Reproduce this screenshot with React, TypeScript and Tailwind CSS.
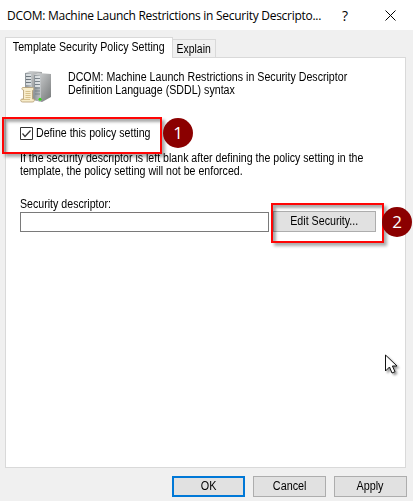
import type { ReactNode } from "react";

function Badge({ n, className }: { n: string; className: string }) {
  return (
    <div className={`absolute flex h-[30px] w-[30px] items-center justify-center rounded-full bg-[#8b0000] pb-0.5 font-['Open_Sans','Noto_Sans',sans-serif] text-[17px] leading-none text-white ${className}`}>
      {n}
    </div>
  );
}

function DialogButton({ children, primary = false }: { children: ReactNode; primary?: boolean }) {
  return (
    <button className={`flex h-[21px] w-[73px] items-center justify-center bg-[#e1e1e1] ${primary ? "border-2 border-[#0078d7]" : "border border-[#adadad]"}`}>
      <span className="scale-x-[.9]">{children}</span>
    </button>
  );
}

function ServerIcon() {
  return (
    <svg width="32" height="32" viewBox="0 0 32 32" className="shrink-0">
      <defs>
        <linearGradient id="side" x1="0" x2="1" y1="0" y2="1">
          <stop offset="0" stopColor="#d9dbdc" />
          <stop offset="1" stopColor="#747778" />
        </linearGradient>
        <linearGradient id="front" x1="0" x2="1">
          <stop offset="0" stopColor="#8b9297" />
          <stop offset="1" stopColor="#c3c7c9" />
        </linearGradient>
      </defs>
      <path d="M5 2 10 0 22 1 22 26 13 28 5 25Z" fill="url(#side)" />
      <path d="M5 2 12 2 12 28 5 25Z" fill="url(#front)" />
      <path d="M6 4h5M6 7h5M6 10h5M6 13h5" stroke="#e9edef" strokeWidth="1.4" />
      <path d="M6 5.5h5M6 8.5h5M6 11.5h5" stroke="#566069" strokeWidth=".7" />
      <path d="M14 4 18 2 31 3 31 26 22 31 14 29Z" fill="url(#side)" />
      <path d="M14 4 21 4 21 31 14 29Z" fill="url(#front)" />
      <path d="M15 6h5M15 9h5M15 12h5M15 15h5" stroke="#edf0f2" strokeWidth="1.5" />
      <path d="M15 7.5h5M15 10.5h5M15 13.5h5M15 17h5M15 20h5M15 23h5" stroke="#69737b" strokeWidth=".7" />
      <circle cx="20" cy="28.3" r="1.5" fill="#35d51b" />
      <path d="M3 16.5h9.5c2 0 1.5 3 0 3V28h2c0 2.5-.7 3-2.5 3H2.5C.2 31 .3 28 2 28h1.5V19C1.5 19 1.4 16.5 3 16.5Z" fill="#f8edcb" stroke="#b19b70" strokeWidth=".8" />
      <path d="M5.5 20.5h5M5.5 22.5h5M5.5 24.5h5M5.5 26.5h5M2 28.5h8" stroke="#c9ad73" strokeWidth=".7" />
    </svg>
  );
}

export default function App() {
  return (
    <div className="relative flex h-[501px] w-[413px] flex-col overflow-hidden bg-[#f0f0f0] font-['Liberation_Sans',Arial,sans-serif] text-[12px] leading-[13px] text-black">
      <header className="flex h-[30px] shrink-0 items-center bg-white pl-[7px] font-['Open_Sans','Noto_Sans',sans-serif] text-[12px]">
        <h1 className="w-[335px] whitespace-nowrap"><span className="tracking-[-0.28px]">DCOM: Machine Launch Restrictions in Security Descripto...</span></h1>
        <span className="w-[43px] text-[14px]">?</span>
        <svg width="11" height="11" viewBox="0 0 11 11" fill="none" stroke="black"><path d="m.5.5 10 10m0-10-10 10" /></svg>
      </header>

      <div className="ml-[5px] mt-[7px] flex h-5 shrink-0 items-end">
        <div className="relative z-10 -mb-px flex h-[21px] w-[168px] justify-center border border-b-0 border-[#d9d9d9] bg-white pt-[3px]">
          <span className="scale-x-[.885] whitespace-nowrap">Template Security Policy Setting</span>
        </div>
        <div className="flex h-[18px] w-[43px] justify-center border border-b-0 border-l-0 border-[#d9d9d9] pt-[3px]"><span className="scale-x-[.87]">Explain</span></div>
      </div>

      <main className="ml-[5px] flex h-[411px] w-[401px] shrink-0 flex-col border border-[#d9d9d9] bg-white pl-[14px]">
        <div className="mt-[13px] flex h-8 items-start">
          <ServerIcon />
          <p className="ml-4 origin-left scale-x-[.887] whitespace-nowrap">DCOM: Machine Launch Restrictions in Security Descriptor<br />Definition Language (SDDL) syntax</p>
        </div>
        <label className="mt-[24px] flex h-[13px] items-center">
          <svg width="13" height="13" viewBox="0 0 13 13" fill="none" stroke="#333"><path d="M.5.5h12v12H.5Z" /><path d="m2.5 6.5 2.5 3 5.5-6" strokeWidth="1.2" /></svg>
          <span className="ml-[3px] origin-left scale-x-[.885] whitespace-nowrap">Define this policy setting</span>
        </label>
        <p className="mt-[12px] origin-left scale-x-[.883] self-start whitespace-nowrap">If the security descriptor is left blank after defining the policy setting in the<br />template, the policy setting will not be enforced.</p>
        <p className="mt-[20px] origin-left scale-x-[.885] self-start whitespace-nowrap">Security descriptor:</p>
        <div className="flex items-end">
          <input aria-label="Security descriptor" className="h-5 w-[249px] border border-[#7a7a7a] bg-white px-1 outline-none" />
          <button className="ml-1 flex h-[21px] w-[103px] items-center justify-center border border-[#adadad] bg-[#e1e1e1]"><span className="scale-x-[.89]">Edit Security...</span></button>
        </div>
      </main>

      <footer className="ml-[172px] mt-2 flex gap-2">
        <DialogButton primary>OK</DialogButton>
        <DialogButton>Cancel</DialogButton>
        <DialogButton>Apply</DialogButton>
      </footer>

      <div className="absolute left-[2px] top-[117px] h-[37px] w-[160px] border-2 border-[#ff0505] shadow-[3px_3px_3px_#0005,inset_3px_3px_3px_#0005]" />
      <Badge n="1" className="left-[163px] top-[118px]" />
      <div className="absolute left-[271px] top-[203px] h-[40px] w-[113px] border-2 border-[#ff0505] shadow-[3px_3px_3px_#0005,inset_3px_3px_3px_#0005]" />
      <Badge n="2" className="left-[382px] top-[207px]" />
      <svg className="absolute left-[385px] top-[354px] drop-shadow-[2px_2px_1px_#0006]" width="13" height="21" viewBox="0 0 13 21"><path d="M.5 1v16l4-4 2.5 6 3-1.3-2.6-5.7H12Z" fill="white" stroke="#111" /></svg>
    </div>
  );
}
